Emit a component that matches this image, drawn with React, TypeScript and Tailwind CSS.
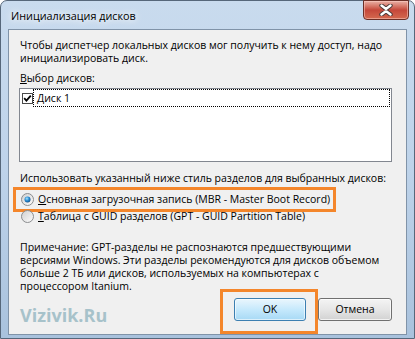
import React from "react";

const font = { fontFamily: '"Open Sans", "Liberation Sans", sans-serif' };

function Radio({ checked }: { checked?: boolean }) {
  const id = checked ? "rgA" : "rgB";
  return (
    <svg width="13" height="13" viewBox="0 0 13 13" className="shrink-0">
      <defs>
        <linearGradient id={id} x1="0" y1="0" x2="1" y2="1">
          <stop offset="0" stopColor="#cfcfcf" />
          <stop offset="1" stopColor="#fdfdfd" />
        </linearGradient>
        <radialGradient id="dotG" cx="0.4" cy="0.35" r="0.7">
          <stop offset="0" stopColor="#a8e4fb" />
          <stop offset="0.5" stopColor="#2b8dd4" />
          <stop offset="1" stopColor="#0d4c86" />
        </radialGradient>
      </defs>
      <circle cx="6.5" cy="6.5" r="6" fill={`url(#${id})`} stroke="#8a8c8e" strokeWidth="1" />
      {checked && <circle cx="6.5" cy="6.5" r="3" fill="url(#dotG)" />}
    </svg>
  );
}

export default function App() {
  return (
    <div className="w-[415px] h-[339px] overflow-hidden bg-white" style={font}>
      <div className="w-[415px] h-[339px] flex flex-col rounded-t-[7px] border border-[#56677a] bg-gradient-to-b from-[#c9dbee] via-[#bed3ea] to-[#a9c2dd]">
        <div className="h-[28px] flex items-start justify-between pl-[10px] pr-[5px] shrink-0">
          <div className="pt-[8px] text-[10.8px] leading-[14px] text-black [text-shadow:0_0_6px_#ffffff,0_0_10px_#ffffff]">
            Инициализация дисков
          </div>
          <div className="w-[46px] h-[20px] mt-[-1px] rounded-b-[4px] border border-[#6b2f27] bg-gradient-to-b from-[#e8b0a6] via-[#c5473a] to-[#d4694f] flex items-center justify-center shadow-[inset_0_0_0_1px_rgba(255,210,200,0.5)]">
            <svg width="14" height="12" viewBox="0 0 14 12">
              <path d="M2.5 1.5 L7 5 L11.5 1.5 M2.5 10.5 L7 7 L11.5 10.5" fill="none" stroke="#4a3a38" strokeWidth="4.4" strokeLinecap="round" />
              <path d="M2.5 1.5 L7 5 L11.5 1.5 M2.5 10.5 L7 7 L11.5 10.5" fill="none" stroke="#ffffff" strokeWidth="2.4" strokeLinecap="round" />
            </svg>
          </div>
        </div>
        <div className="flex-1 mx-[7px] mb-[4px] border border-[#8093a8] bg-[#f0f0f0] flex flex-col pl-[11px] pr-[14px] pt-[9px] text-[10.5px] leading-[13px] text-black whitespace-nowrap">
          <div>
            Чтобы диспетчер локальных дисков мог получить к нему доступ, надо
            <br />
            инициализировать диск.
          </div>
          <div className="mt-[7px]">
            <span className="underline">В</span>ыбор дисков:
          </div>
          <div className="mt-[3px] ml-[-1px] h-[74px] border border-[#828790] bg-white pl-[2px] pr-[1px]">
            <div className="flex items-center h-[18px]">
              <div className="w-[11px] h-[11px] border border-[#4a4a4a] bg-white flex items-center justify-center shrink-0">
                <svg width="9" height="9" viewBox="0 0 9 9">
                  <path d="M1.2 4.2 L3.4 6.6 L7.8 1.6" fill="none" stroke="#000" strokeWidth="1.8" />
                </svg>
              </div>
              <div className="flex-1 h-[18px] border border-dotted border-black flex items-center pl-[3px]">
                Диск 1
              </div>
            </div>
          </div>
          <div className="mt-[10px]">Использовать указанный ниже стиль разделов для выбранных дисков:</div>
          <div className="mt-[2px] ml-[-7px] w-[323px] h-[25px] border-[3px] border-[#f4862b] flex items-center pl-[5px] gap-[4px]">
            <Radio checked />
            <span>
              <span className="underline">О</span>сновная загрузочная запись (MBR - Master Boot Record)
            </span>
          </div>
          <div className="mt-[-3px] flex items-center gap-[4px] h-[14px] pl-[1px]">
            <Radio />
            <span>
              <span className="underline">Т</span>аблица с GUID разделов (GPT - GUID Partition Table)
            </span>
          </div>
          <div className="mt-[18px]">
            Примечание: GPT-разделы не распознаются предшествующими
            <br />
            версиями Windows. Эти разделы рекомендуются для дисков объемом
            <br />
            больше 2 ТБ или дисков, используемых на компьютерах с
            <br />
            процессором Itanium.
          </div>
          <div className="flex items-start justify-between mt-[-4px]">
            <div className="mt-[17px] text-[18px] leading-[18px] font-bold text-[#a7c2ca]">
              Vizivik.Ru
            </div>
            <div className="flex items-start">
              <div className="border-[3px] border-[#f4862b] pl-[11px] pr-[9px] pt-[6px] pb-[10px]">
                <div className="w-[72px] h-[23px] rounded-[3px] border border-[#3c7fb1] bg-gradient-to-b from-[#eaf6fd] via-[#c6e9fc] to-[#a7d9f5] flex items-center justify-center shadow-[inset_0_0_0_1px_rgba(255,255,255,0.6)]">
                  OK
                </div>
              </div>
              <div className="mt-[9px] w-[74px] h-[23px] rounded-[3px] border border-[#707070] bg-gradient-to-b from-[#f4f4f4] via-[#e6e6e6] to-[#d2d2d2] flex items-center justify-center shadow-[inset_0_0_0_1px_rgba(255,255,255,0.7)]">
                Отмена
              </div>
            </div>
          </div>
        </div>
      </div>
    </div>
  );
}
